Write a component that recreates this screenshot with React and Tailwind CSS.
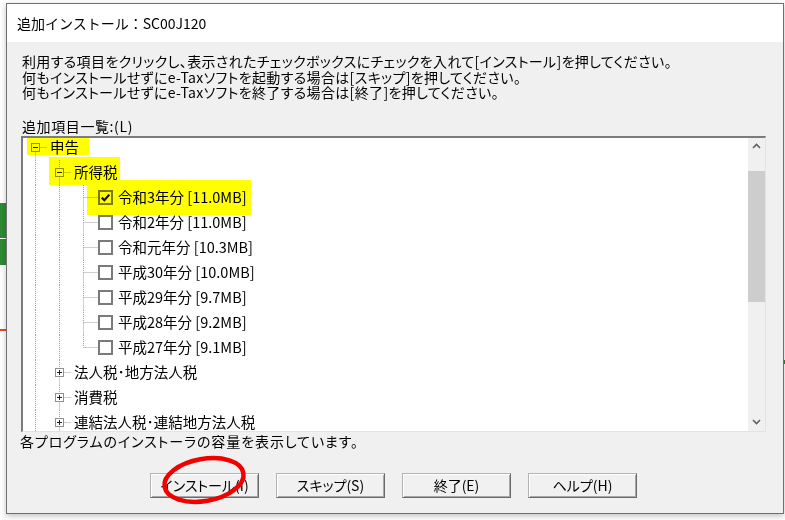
import React from "react";

const rows = [
  { label: "申告", cells: ["own"], btn: "minus", top: false, next: true },
  { label: "所得税", cells: ["pass", "own"], btn: "minus", top: true, next: true },
  { label: "令和3年分 [11.0MB]", cells: ["pass", "pass", "own"], leaf: true, checked: true, top: true, next: true },
  { label: "令和2年分 [11.0MB]", cells: ["pass", "pass", "own"], leaf: true, top: true, next: true },
  { label: "令和元年分 [10.3MB]", cells: ["pass", "pass", "own"], leaf: true, top: true, next: true },
  { label: "平成30年分 [10.0MB]", cells: ["pass", "pass", "own"], leaf: true, top: true, next: true },
  { label: "平成29年分 [9.7MB]", cells: ["pass", "pass", "own"], leaf: true, top: true, next: true },
  { label: "平成28年分 [9.2MB]", cells: ["pass", "pass", "own"], leaf: true, top: true, next: true },
  { label: "平成27年分 [9.1MB]", cells: ["pass", "pass", "own"], leaf: true, top: true, next: false },
  { label: "法人税･地方法人税", cells: ["pass", "own"], btn: "plus", top: true, next: true },
  { label: "消費税", cells: ["pass", "own"], btn: "plus", top: true, next: true },
  { label: "連結法人税･連結地方法人税", cells: ["pass", "own"], btn: "plus", top: true, next: true },
];

const dot = { stroke: "#a0a0a0", strokeWidth: 1, strokeDasharray: "1 1" };

function Cell({ kind, top, next, btn, leaf }) {
  return (
    <svg width="24" height="25" className="shrink-0 overflow-visible">
      {kind === "pass" && <line x1="12.5" y1="0" x2="12.5" y2="25" {...dot} />}
      {kind === "own" && (
        <>
          {top && <line x1="12.5" y1="0" x2="12.5" y2="12.5" {...dot} />}
          {next && <line x1="12.5" y1="12.5" x2="12.5" y2="25" {...dot} />}
          <line x1="12.5" y1="12.5" x2={leaf ? 27 : 24} y2="12.5" {...dot} />
          {btn && (
            <>
              <rect x="8.5" y="8.5" width="8" height="8" fill="#fff" stroke="#919191" />
              <line x1="10" y1="12.5" x2="15" y2="12.5" stroke="#222" />
              {btn === "plus" && <line x1="12.5" y1="10" x2="12.5" y2="15" stroke="#222" />}
            </>
          )}
        </>
      )}
    </svg>
  );
}

function Checkbox({ checked }) {
  return (
    <svg width="15" height="15" className="shrink-0">
      <rect x="1" y="1" width="13" height="13" fill="#fff" stroke="#7a7a7a" strokeWidth="2" />
      {checked && <path d="M3.8 7.6 L6.4 10.2 L11.3 4.6" fill="none" stroke="#111" strokeWidth="2.2" />}
    </svg>
  );
}

function Chevron({ up }) {
  return (
    <svg width="9" height="6">
      <path d={up ? "M1 5 L4.5 1.5 L8 5" : "M1 1 L4.5 4.5 L8 1"} fill="none" stroke="#606060" strokeWidth="1.6" />
    </svg>
  );
}

function Btn({ children }) {
  return (
    <div className="w-[109px] h-[25px] flex items-center justify-center bg-[#f1f1f1] border border-t-[#b4b4b4] border-l-[#b4b4b4] border-r-[#6a6a6a] border-b-[#6a6a6a] shadow-[inset_1px_1px_0_#fff,inset_-1px_-1px_0_#a8a8a8] text-[14px]">
      {children}
    </div>
  );
}

export default function App() {
  return (
    <div className="relative w-[785px] h-[520px] overflow-hidden bg-white text-black font-['Noto_Sans_CJK_JP',sans-serif] [font-feature-settings:'palt']">
      {/* page behind the dialog */}
      <div className="absolute left-[210px] top-[-62px] text-[60px] leading-none text-black whitespace-nowrap">
        のインストールと申告書の作成ヘ
      </div>
      <div className="absolute left-0 top-[203px] w-[6px] h-[62px] bg-[#2e8b32]">
        <div className="mt-[35px] h-[1px] bg-white" />
      </div>
      <div className="absolute left-0 top-[329px] w-[6px] h-[2px] bg-[#e8461e]" />
      <div className="absolute left-[784px] top-[360px] w-[1px] h-[4px] bg-[#2e8b32]" />

      {/* dialog window */}
      <div className="absolute left-[6px] top-[3px] w-[778px] h-[511px] border border-[#6f6f6f] bg-[#f0f0f0] flex flex-col shadow-[0_2px_6px_rgba(0,0,0,0.25)]">
        <div className="h-[38px] bg-white flex items-center pl-[10px] text-[14px] [font-feature-settings:normal]">
          追加インストール：SC00J120
        </div>

        <div className="flex-1 flex flex-col pl-[14px] pt-[12px]">
          <div className="pl-[1px] text-[14px] leading-[15.5px] tracking-[0.35px]">
            <div>利用する項目をクリックし、表示されたチェックボックスにチェックを入れて[インストール]を押してください。</div>
            <div>何もインストールせずにe-Taxソフトを起動する場合は[スキップ]を押してください。</div>
            <div>何もインストールせずにe-Taxソフトを終了する場合は[終了]を押してください。</div>
          </div>

          <div className="mt-[17px] pl-[1px] text-[14px] leading-[16px] tracking-[0.6px]">追加項目一覧:(L)</div>

          <div className="mt-[2px] w-[745px] h-[296px] flex border-t-2 border-l-2 border-t-[#7c7c7c] border-l-[#7c7c7c] border-r border-b border-r-[#e3e3e3] border-b-[#e3e3e3] bg-white">
            <div className="relative flex-1 overflow-hidden">
              <div className="-mt-[3px] flex flex-col text-[14.5px]">
                {rows.map((r) => (
                  <div key={r.label} className="h-[25px] flex items-center">
                    {r.cells.map((c, i) => (
                      <Cell
                        key={i}
                        kind={c}
                        top={r.top}
                        next={r.next}
                        btn={c === "own" ? r.btn : null}
                        leaf={r.leaf}
                      />
                    ))}
                    {r.leaf ? (
                      <>
                        <div className="ml-[3px]">
                          <Checkbox checked={r.checked} />
                        </div>
                        <span className="ml-[5px] leading-none">{r.label}</span>
                      </>
                    ) : (
                      <span className="ml-[3px] leading-none">{r.label}</span>
                    )}
                  </div>
                ))}
              </div>
              {/* highlighter marks */}
              <div className="absolute left-[4px] top-[-2px] w-[62px] h-[19px] bg-[#ffff00] mix-blend-multiply" />
              <div className="absolute left-[26px] top-[19px] w-[71px] h-[28px] bg-[#ffff00] mix-blend-multiply" />
              <div className="absolute left-[64px] top-[42px] w-[164px] h-[35px] bg-[#ffff00] mix-blend-multiply" />
            </div>

            <div className="w-[17px] bg-[#f0f0f0] flex flex-col">
              <div className="h-[17px] flex items-center justify-center">
                <Chevron up />
              </div>
              <div className="mt-[16px] h-[131px] bg-[#cdcdcd]" />
              <div className="flex-1" />
              <div className="h-[17px] flex items-center justify-center">
                <Chevron />
              </div>
            </div>
          </div>

          <div className="-ml-[1px] text-[14px] leading-[16px] mt-[1px] tracking-[0.9px]">各プログラムのインストーラの容量を表示しています。</div>

          <div className="mt-[24px] pl-[129px] flex gap-[17px]">
            <Btn>インストール(I)</Btn>
            <Btn>スキップ(S)</Btn>
            <Btn>終了(E)</Btn>
            <Btn>ヘルプ(H)</Btn>
          </div>
        </div>
      </div>

      {/* red annotation ellipse */}
      <svg className="absolute left-0 top-0 pointer-events-none" width="785" height="520">
        <ellipse cx="204" cy="480" rx="40" ry="21" fill="none" stroke="#f00000" strokeWidth="4.5" transform="rotate(-10 204 480)" />
      </svg>
    </div>
  );
}
